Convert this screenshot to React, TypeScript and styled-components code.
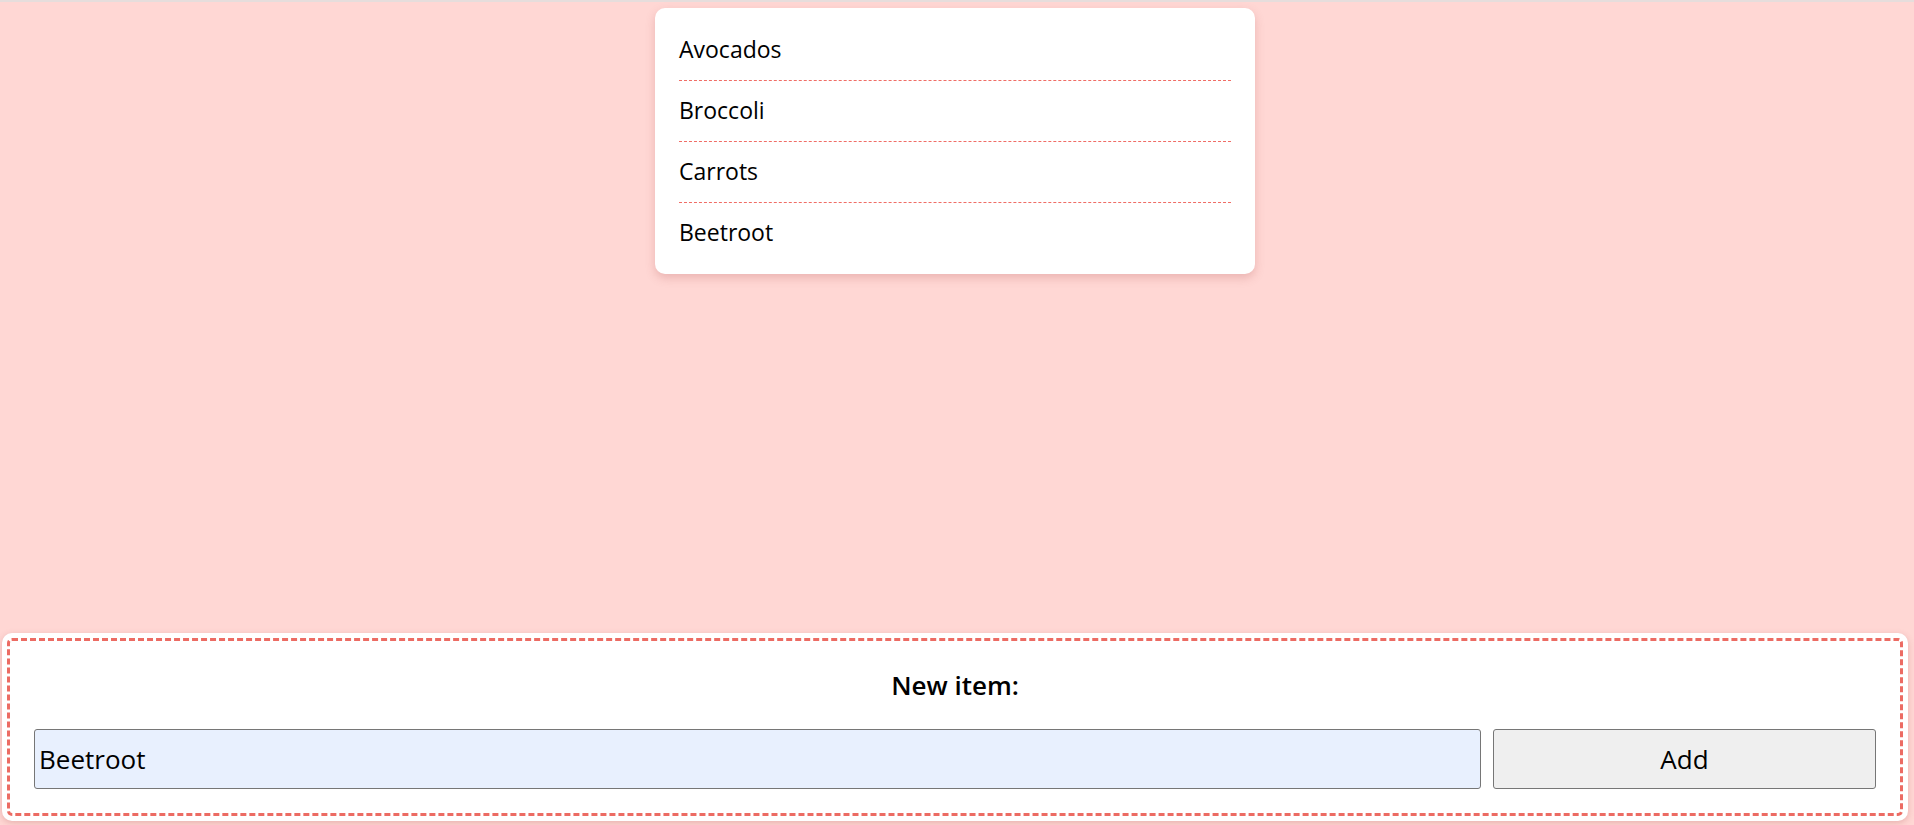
import React, { useState } from "react";
import styled, { createGlobalStyle } from "styled-components";

const GlobalStyle = createGlobalStyle`
  html, body {
    margin: 0;
    padding: 0;
  }
  body {
    box-sizing: border-box;
    height: 100vh;
    background: #ffd7d4;
    border-top: 2px solid #e6dddc;
    font-family: "Open Sans", "Noto Sans", sans-serif;
    color: #000;
    overflow: hidden;
  }
  #root {
    height: 100%;
  }
  *, *::before, *::after {
    box-sizing: border-box;
  }
`;

const Page = styled.div`
  height: 100%;
  padding-right: 4px;
  display: flex;
  flex-direction: column;
`;

const ListCard = styled.ul`
  list-style: none;
  width: 600px;
  margin: 6px auto 0;
  padding: 12px 24px 11px;
  background: #fff;
  border-radius: 10px;
  box-shadow: 0 4px 10px rgba(180, 90, 90, 0.28);
`;

const ListItem = styled.li`
  font-size: 23px;
  line-height: 32px;
  padding: 13px 0 15px;
  border-bottom: 1px dashed #f06d66;

  &:last-child {
    border-bottom: none;
  }
`;

const Spacer = styled.div`
  flex: 1;
`;

const Panel = styled.form`
  margin: 0 2px 4px 2px;
  padding: 5px;
  background: #fff;
  border-radius: 10px;
  box-shadow: 0 2px 6px rgba(180, 90, 90, 0.3);
`;

const DashedBox = styled.div`
  border: 3px dashed #ec6b63;
  border-radius: 5px;
  padding: 26px 24px 24px;
  display: flex;
  flex-direction: column;
  gap: 26px;
`;

const Heading = styled.label`
  display: block;
  text-align: center;
  font-size: 26px;
  font-weight: 600;
  line-height: 36px;
`;

const InputRow = styled.div`
  display: flex;
  gap: 12px;
`;

const TextInput = styled.input`
  flex: 1;
  min-width: 0;
  height: 60px;
  padding: 0 4px;
  font-family: "Open Sans", "Noto Sans", sans-serif;
  font-size: 26px;
  color: #000;
  background: #e8f0fe;
  border: 1px solid #767676;
  border-radius: 3px;
  outline: none;
`;

const AddButton = styled.button`
  width: 383px;
  height: 60px;
  font-family: "Open Sans", "Noto Sans", sans-serif;
  font-size: 26px;
  color: #000;
  background: #efefef;
  border: 1px solid #767676;
  border-radius: 3px;
  cursor: pointer;
`;

export default function App() {
  const [items, setItems] = useState<string[]>([
    "Avocados",
    "Broccoli",
    "Carrots",
    "Beetroot",
  ]);
  const [value, setValue] = useState("Beetroot");

  const onSubmit = (e: React.FormEvent) => {
    e.preventDefault();
    if (value.trim()) {
      setItems([...items, value.trim()]);
    }
  };

  return (
    <>
      <GlobalStyle />
      <Page>
        <ListCard>
          {items.map((item, i) => (
            <ListItem key={i}>{item}</ListItem>
          ))}
        </ListCard>
        <Spacer />
        <Panel onSubmit={onSubmit}>
          <DashedBox>
            <Heading htmlFor="new-item">New item:</Heading>
            <InputRow>
              <TextInput
                id="new-item"
                value={value}
                onChange={(e) => setValue(e.target.value)}
              />
              <AddButton type="submit">Add</AddButton>
            </InputRow>
          </DashedBox>
        </Panel>
      </Page>
    </>
  );
}
